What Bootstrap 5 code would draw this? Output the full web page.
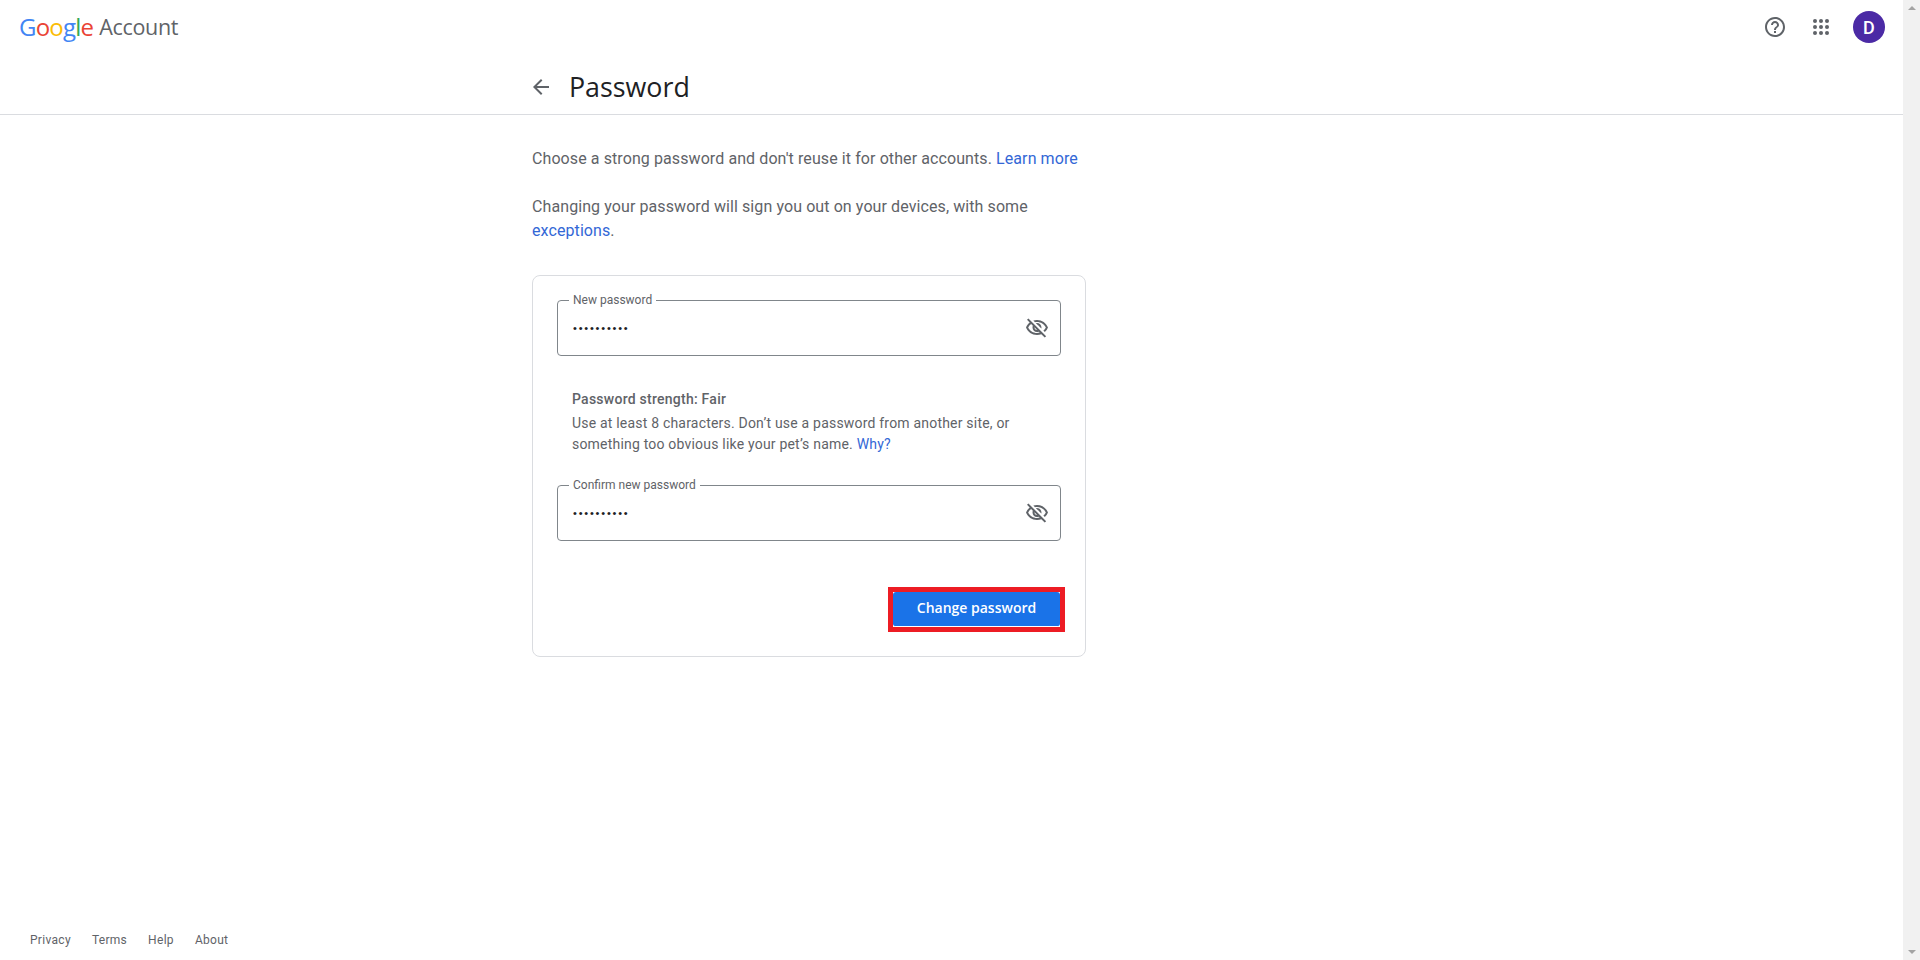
<!DOCTYPE html>
<html lang="en">

<head>
    <meta charset="UTF-8">
    <meta name="viewport" content="width=device-width, initial-scale=1.0">
    <title>Password</title>
    <link rel="stylesheet" href="https://cdn.jsdelivr.net/npm/bootstrap@5.3.0/dist/css/bootstrap.min.css">
    <style>
        html, body { height: 100%; overflow: hidden; }
        body { font-family: Roboto, "Liberation Sans", sans-serif; color: #5f6368; background: #fff; }
        .page-shell { height: 960px; }
        .page-main { min-width: 0; }
        .fake-scrollbar { width: 17px; background: #f1f1f1; padding: 6px 0; }
        .tri-up { width: 0; height: 0; border-left: 4px solid transparent; border-right: 4px solid transparent; border-bottom: 4px solid #a3a3a3; }
        .tri-down { width: 0; height: 0; border-left: 4px solid transparent; border-right: 4px solid transparent; border-top: 4px solid #a3a3a3; }

        .top-bar { height: 55px; padding-left: 19px; padding-right: 18px; padding-bottom: 1px; }
        .logo-word { font-family: "Open Sans", sans-serif; font-size: 24px; letter-spacing: -0.8px; line-height: 1; }
        .logo-blue { color: #4285f4; }
        .logo-red { color: #ea4335; }
        .logo-yellow { color: #fbbc05; }
        .logo-green { color: #34a853; }
        .logo-product { font-family: "Open Sans", sans-serif; font-size: 21.5px; letter-spacing: -0.3px; color: #5f6368; margin-left: 6px; line-height: 1; }
        .top-icons { gap: 20px; }
        .help-icon { margin-right: 2px; }
        .avatar-dot { width: 32px; height: 32px; border-radius: 50%; background: #4b2aa5; color: #fff; font-size: 18px; font-weight: 500; }

        .title-row { height: 60px; border-bottom: 1px solid #dadce0; padding-left: 529px; padding-top: 4px; }
        .title-text { font-family: "Open Sans", sans-serif; font-size: 26.8px; font-weight: 400; color: #202124; margin: 0 0 0 16px; line-height: 36px; }

        .content-col { width: 554px; margin-left: 532px; padding-top: 32px; }
        .intro-text { font-size: 16px; line-height: 24px; margin: 0 0 24px; letter-spacing: 0.09px; }
        .g-link { color: #3367d6; text-decoration: none; }

        .pw-card { border: 1px solid #dadce0; border-radius: 8px; margin-top: 32px; height: 382px; padding: 17px 24px 0 24px; }
        .pw-field { border: 1px solid #80868b; border-radius: 4px; height: 63px; padding: 0 11px 6px 11px; margin: 0; }
        .pw-field legend { float: none; width: auto; font-size: 12px; line-height: 14px; padding: 0 4px; margin: 0; color: #5f6368; }
        .pw-input { border: 0; outline: 0; padding: 0 0 0 4px; height: 34px; font-size: 11px; letter-spacing: 1.8px; font-family: "Liberation Sans", sans-serif; color: #202124; min-width: 0; background: transparent; }
        .strength-box { padding: 33px 15px 0; height: 122px; }
        .strength-title { font-size: 14px; font-weight: 500; line-height: 20px; margin: 0 0 4px; letter-spacing: 0.25px; }
        .strength-help { font-size: 14px; line-height: 21px; margin: 0; letter-spacing: 0.2px; }

        .red-outline { border: 5px solid #ed1c24; margin-top: 46px; margin-right: -4px; }
        .change-btn { width: 167px; height: 35px; padding: 0 0 3px; border: 0; border-bottom: 1px solid #fff; border-radius: 3px; background: #1a73e8; color: #fff; font-family: "Open Sans", sans-serif; font-size: 14px; font-weight: 600; display: block; }

        .foot-links { padding-left: 30px; gap: 21px; padding-bottom: 12px; font-size: 12px; line-height: 16px; }
        .foot-links a { color: #5f6368; text-decoration: none; letter-spacing: 0.3px; }
    </style>
</head>

<body>
    <div class="page-shell d-flex">
        <div class="page-main flex-grow-1 d-flex flex-column">
            <header class="top-bar d-flex align-items-center justify-content-between">
                <div class="d-flex align-items-center">
                    <span class="logo-word"><span class="logo-blue">G</span><span class="logo-red">o</span><span class="logo-yellow">o</span><span class="logo-blue">g</span><span class="logo-green">l</span><span class="logo-red">e</span></span>
                    <span class="logo-product">Account</span>
                </div>
                <div class="top-icons d-flex align-items-center">
                    <svg class="help-icon" width="24" height="24" viewBox="0 0 24 24" fill="#5f6368"><path d="M11 18h2v-2h-2v2zm1-16C6.48 2 2 6.48 2 12s4.48 10 10 10 10-4.48 10-10S17.52 2 12 2zm0 18c-4.41 0-8-3.59-8-8s3.59-8 8-8 8 3.59 8 8-3.59 8-8 8zm0-14c-2.21 0-4 1.79-4 4h2c0-1.1.9-2 2-2s2 .9 2 2c0 2-3 1.75-3 5h2c0-2.25 3-2.5 3-5 0-2.21-1.79-4-4-4z"/></svg>
                    <svg width="24" height="24" viewBox="0 0 24 24" fill="#5f6368"><circle cx="6" cy="6" r="2"/><circle cx="12" cy="6" r="2"/><circle cx="18" cy="6" r="2"/><circle cx="6" cy="12" r="2"/><circle cx="12" cy="12" r="2"/><circle cx="18" cy="12" r="2"/><circle cx="6" cy="18" r="2"/><circle cx="12" cy="18" r="2"/><circle cx="18" cy="18" r="2"/></svg>
                    <div class="avatar-dot d-flex align-items-center justify-content-center">D</div>
                </div>
            </header>

            <div class="title-row d-flex align-items-center">
                <svg width="24" height="24" viewBox="0 0 24 24" fill="#5f6368"><path d="M20 11H7.83l5.59-5.59L12 4l-8 8 8 8 1.41-1.41L7.83 13H20v-2z"/></svg>
                <h1 class="title-text">Password</h1>
            </div>

            <main class="content-col flex-grow-1">
                <p class="intro-text">Choose a strong password and don't reuse it for other accounts. <a class="g-link" href="#">Learn more</a></p>
                <p class="intro-text">Changing your password will sign you out on your devices, with some <a class="g-link" href="#">exceptions</a>.</p>

                <form class="pw-card">
                    <fieldset class="pw-field d-flex align-items-center">
                        <legend>New password</legend>
                        <input class="pw-input flex-grow-1" type="password" value="1234567890" aria-label="New password">
                        <svg width="24" height="24" viewBox="0 0 24 24" fill="#5f6368"><path d="M12 6c3.79 0 7.17 2.13 8.82 5.5-.59 1.22-1.42 2.27-2.41 3.12l1.41 1.41c1.39-1.23 2.49-2.77 3.18-4.53C21.27 7.11 17 4 12 4c-1.27 0-2.49.2-3.64.57l1.65 1.65C10.66 6.09 11.32 6 12 6zm-1.07 1.14L13 9.21c.57.25 1.03.71 1.28 1.28l2.07 2.07c.08-.34.14-.7.14-1.07C16.5 9.01 14.48 7 12 7c-.37 0-.72.05-1.07.14zM2.01 3.87l2.68 2.68C3.06 7.83 1.77 9.53 1 11.5 2.73 15.89 7 19 12 19c1.52 0 2.98-.29 4.32-.82l3.42 3.42 1.41-1.41L3.42 2.45 2.01 3.87zm7.5 7.5l2.61 2.61c-.04.01-.08.02-.12.02-1.38 0-2.5-1.12-2.5-2.5 0-.05.01-.08.01-.13zm-3.4-3.4l1.75 1.75c-.23.55-.36 1.15-.36 1.78 0 2.48 2.02 4.5 4.5 4.5.63 0 1.23-.13 1.77-.36l.98.98c-.88.24-1.8.38-2.75.38-3.79 0-7.17-2.13-8.82-5.5.7-1.43 1.72-2.61 2.93-3.53z"/></svg>
                    </fieldset>

                    <div class="strength-box">
                        <p class="strength-title">Password strength: Fair</p>
                        <p class="strength-help">Use at least 8 characters. Don’t use a password from another site, or something too obvious like your pet’s name. <a class="g-link" href="#">Why?</a></p>
                    </div>

                    <fieldset class="pw-field d-flex align-items-center">
                        <legend>Confirm new password</legend>
                        <input class="pw-input flex-grow-1" type="password" value="1234567890" aria-label="Confirm new password">
                        <svg width="24" height="24" viewBox="0 0 24 24" fill="#5f6368"><path d="M12 6c3.79 0 7.17 2.13 8.82 5.5-.59 1.22-1.42 2.27-2.41 3.12l1.41 1.41c1.39-1.23 2.49-2.77 3.18-4.53C21.27 7.11 17 4 12 4c-1.27 0-2.49.2-3.64.57l1.65 1.65C10.66 6.09 11.32 6 12 6zm-1.07 1.14L13 9.21c.57.25 1.03.71 1.28 1.28l2.07 2.07c.08-.34.14-.7.14-1.07C16.5 9.01 14.48 7 12 7c-.37 0-.72.05-1.07.14zM2.01 3.87l2.68 2.68C3.06 7.83 1.77 9.53 1 11.5 2.73 15.89 7 19 12 19c1.52 0 2.98-.29 4.32-.82l3.42 3.42 1.41-1.41L3.42 2.45 2.01 3.87zm7.5 7.5l2.61 2.61c-.04.01-.08.02-.12.02-1.38 0-2.5-1.12-2.5-2.5 0-.05.01-.08.01-.13zm-3.4-3.4l1.75 1.75c-.23.55-.36 1.15-.36 1.78 0 2.48 2.02 4.5 4.5 4.5.63 0 1.23-.13 1.77-.36l.98.98c-.88.24-1.8.38-2.75.38-3.79 0-7.17-2.13-8.82-5.5.7-1.43 1.72-2.61 2.93-3.53z"/></svg>
                    </fieldset>

                    <div class="d-flex justify-content-end">
                        <div class="red-outline">
                            <button class="change-btn" type="button">Change password</button>
                        </div>
                    </div>
                </form>
            </main>

            <footer class="foot-links d-flex">
                <a href="#">Privacy</a>
                <a href="#">Terms</a>
                <a href="#">Help</a>
                <a href="#">About</a>
            </footer>
        </div>
        <div class="fake-scrollbar d-flex flex-column justify-content-between align-items-center">
            <div class="tri-up"></div>
            <div class="tri-down"></div>
        </div>
    </div>
    <script src="https://cdn.jsdelivr.net/npm/bootstrap@5.3.0/dist/js/bootstrap.bundle.min.js"></script>
</body>

</html>
